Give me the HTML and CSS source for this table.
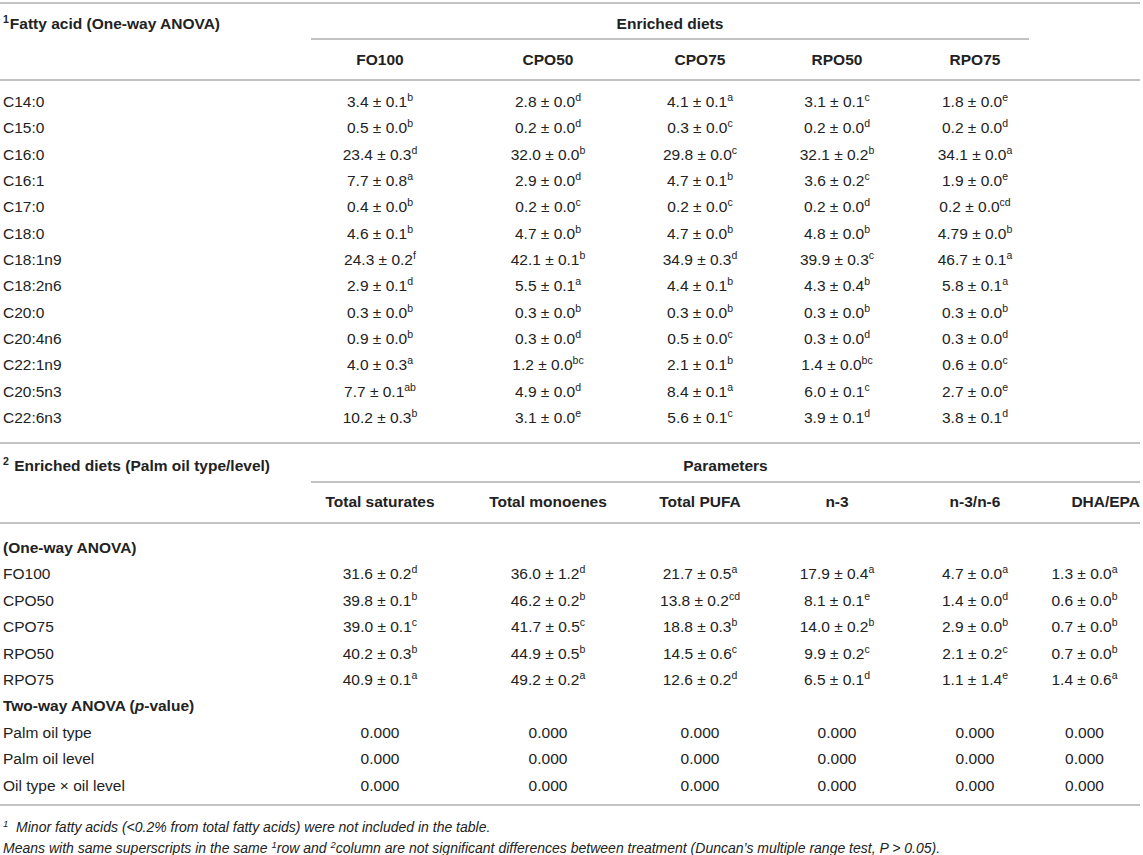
FILE: index.html
```html
<!DOCTYPE html>
<html lang="en">
<head>
<meta charset="utf-8">
<title>Fatty acid composition</title>
<link rel="stylesheet" href="styles.css">
</head>
<body>
<div class="page">
  <section class="tbl tbl-top">
    <div class="row title-row">
      <div class="cell lab b"><sup class="fn">1</sup>Fatty acid (One-way ANOVA)</div>
      <div class="cell span5 b">Enriched diets</div>
      <div class="cell"></div>
    </div>
    <div class="row head-row">
      <div class="cell"></div>
      <div class="cell b">FO100</div>
      <div class="cell b">CPO50</div>
      <div class="cell b">CPO75</div>
      <div class="cell b">RPO50</div>
      <div class="cell b">RPO75</div>
      <div class="cell"></div>
    </div>
    <div class="body body-top">
      <div class="row data"><div class="cell lab">C14:0</div><div class="cell">3.4 ± 0.1<sup>b</sup></div><div class="cell">2.8 ± 0.0<sup>d</sup></div><div class="cell">4.1 ± 0.1<sup>a</sup></div><div class="cell">3.1 ± 0.1<sup>c</sup></div><div class="cell">1.8 ± 0.0<sup>e</sup></div><div class="cell"></div></div>
      <div class="row data"><div class="cell lab">C15:0</div><div class="cell">0.5 ± 0.0<sup>b</sup></div><div class="cell">0.2 ± 0.0<sup>d</sup></div><div class="cell">0.3 ± 0.0<sup>c</sup></div><div class="cell">0.2 ± 0.0<sup>d</sup></div><div class="cell">0.2 ± 0.0<sup>d</sup></div><div class="cell"></div></div>
      <div class="row data"><div class="cell lab">C16:0</div><div class="cell">23.4 ± 0.3<sup>d</sup></div><div class="cell">32.0 ± 0.0<sup>b</sup></div><div class="cell">29.8 ± 0.0<sup>c</sup></div><div class="cell">32.1 ± 0.2<sup>b</sup></div><div class="cell">34.1 ± 0.0<sup>a</sup></div><div class="cell"></div></div>
      <div class="row data"><div class="cell lab">C16:1</div><div class="cell">7.7 ± 0.8<sup>a</sup></div><div class="cell">2.9 ± 0.0<sup>d</sup></div><div class="cell">4.7 ± 0.1<sup>b</sup></div><div class="cell">3.6 ± 0.2<sup>c</sup></div><div class="cell">1.9 ± 0.0<sup>e</sup></div><div class="cell"></div></div>
      <div class="row data"><div class="cell lab">C17:0</div><div class="cell">0.4 ± 0.0<sup>b</sup></div><div class="cell">0.2 ± 0.0<sup>c</sup></div><div class="cell">0.2 ± 0.0<sup>c</sup></div><div class="cell">0.2 ± 0.0<sup>d</sup></div><div class="cell">0.2 ± 0.0<sup>cd</sup></div><div class="cell"></div></div>
      <div class="row data"><div class="cell lab">C18:0</div><div class="cell">4.6 ± 0.1<sup>b</sup></div><div class="cell">4.7 ± 0.0<sup>b</sup></div><div class="cell">4.7 ± 0.0<sup>b</sup></div><div class="cell">4.8 ± 0.0<sup>b</sup></div><div class="cell">4.79 ± 0.0<sup>b</sup></div><div class="cell"></div></div>
      <div class="row data"><div class="cell lab">C18:1n9</div><div class="cell">24.3 ± 0.2<sup>f</sup></div><div class="cell">42.1 ± 0.1<sup>b</sup></div><div class="cell">34.9 ± 0.3<sup>d</sup></div><div class="cell">39.9 ± 0.3<sup>c</sup></div><div class="cell">46.7 ± 0.1<sup>a</sup></div><div class="cell"></div></div>
      <div class="row data"><div class="cell lab">C18:2n6</div><div class="cell">2.9 ± 0.1<sup>d</sup></div><div class="cell">5.5 ± 0.1<sup>a</sup></div><div class="cell">4.4 ± 0.1<sup>b</sup></div><div class="cell">4.3 ± 0.4<sup>b</sup></div><div class="cell">5.8 ± 0.1<sup>a</sup></div><div class="cell"></div></div>
      <div class="row data"><div class="cell lab">C20:0</div><div class="cell">0.3 ± 0.0<sup>b</sup></div><div class="cell">0.3 ± 0.0<sup>b</sup></div><div class="cell">0.3 ± 0.0<sup>b</sup></div><div class="cell">0.3 ± 0.0<sup>b</sup></div><div class="cell">0.3 ± 0.0<sup>b</sup></div><div class="cell"></div></div>
      <div class="row data"><div class="cell lab">C20:4n6</div><div class="cell">0.9 ± 0.0<sup>b</sup></div><div class="cell">0.3 ± 0.0<sup>d</sup></div><div class="cell">0.5 ± 0.0<sup>c</sup></div><div class="cell">0.3 ± 0.0<sup>d</sup></div><div class="cell">0.3 ± 0.0<sup>d</sup></div><div class="cell"></div></div>
      <div class="row data"><div class="cell lab">C22:1n9</div><div class="cell">4.0 ± 0.3<sup>a</sup></div><div class="cell">1.2 ± 0.0<sup>bc</sup></div><div class="cell">2.1 ± 0.1<sup>b</sup></div><div class="cell">1.4 ± 0.0<sup>bc</sup></div><div class="cell">0.6 ± 0.0<sup>c</sup></div><div class="cell"></div></div>
      <div class="row data"><div class="cell lab">C20:5n3</div><div class="cell">7.7 ± 0.1<sup>ab</sup></div><div class="cell">4.9 ± 0.0<sup>d</sup></div><div class="cell">8.4 ± 0.1<sup>a</sup></div><div class="cell">6.0 ± 0.1<sup>c</sup></div><div class="cell">2.7 ± 0.0<sup>e</sup></div><div class="cell"></div></div>
      <div class="row data"><div class="cell lab">C22:6n3</div><div class="cell">10.2 ± 0.3<sup>b</sup></div><div class="cell">3.1 ± 0.0<sup>e</sup></div><div class="cell">5.6 ± 0.1<sup>c</sup></div><div class="cell">3.9 ± 0.1<sup>d</sup></div><div class="cell">3.8 ± 0.1<sup>d</sup></div><div class="cell"></div></div>
    </div>
  </section>

  <section class="tbl tbl-bottom">
    <div class="row title-row title-row-2">
      <div class="cell lab b"><sup class="fn">2</sup> Enriched diets (Palm oil type/level)</div>
      <div class="cell span6 b">Parameters</div>
    </div>
    <div class="row head-row head-row-2">
      <div class="cell"></div>
      <div class="cell b">Total saturates</div>
      <div class="cell b">Total monoenes</div>
      <div class="cell b">Total PUFA</div>
      <div class="cell b">n-3</div>
      <div class="cell b">n-3/n-6</div>
      <div class="cell b last-head">DHA/EPA</div>
    </div>
    <div class="body body-bottom">
      <div class="row data data-2"><div class="cell lab b">(One-way ANOVA)</div><div class="cell"></div><div class="cell"></div><div class="cell"></div><div class="cell"></div><div class="cell"></div><div class="cell"></div></div>
      <div class="row data data-2"><div class="cell lab">FO100</div><div class="cell">31.6 ± 0.2<sup>d</sup></div><div class="cell">36.0 ± 1.2<sup>d</sup></div><div class="cell">21.7 ± 0.5<sup>a</sup></div><div class="cell">17.9 ± 0.4<sup>a</sup></div><div class="cell">4.7 ± 0.0<sup>a</sup></div><div class="cell">1.3 ± 0.0<sup>a</sup></div></div>
      <div class="row data data-2"><div class="cell lab">CPO50</div><div class="cell">39.8 ± 0.1<sup>b</sup></div><div class="cell">46.2 ± 0.2<sup>b</sup></div><div class="cell">13.8 ± 0.2<sup>cd</sup></div><div class="cell">8.1 ± 0.1<sup>e</sup></div><div class="cell">1.4 ± 0.0<sup>d</sup></div><div class="cell">0.6 ± 0.0<sup>b</sup></div></div>
      <div class="row data data-2"><div class="cell lab">CPO75</div><div class="cell">39.0 ± 0.1<sup>c</sup></div><div class="cell">41.7 ± 0.5<sup>c</sup></div><div class="cell">18.8 ± 0.3<sup>b</sup></div><div class="cell">14.0 ± 0.2<sup>b</sup></div><div class="cell">2.9 ± 0.0<sup>b</sup></div><div class="cell">0.7 ± 0.0<sup>b</sup></div></div>
      <div class="row data data-2"><div class="cell lab">RPO50</div><div class="cell">40.2 ± 0.3<sup>b</sup></div><div class="cell">44.9 ± 0.5<sup>b</sup></div><div class="cell">14.5 ± 0.6<sup>c</sup></div><div class="cell">9.9 ± 0.2<sup>c</sup></div><div class="cell">2.1 ± 0.2<sup>c</sup></div><div class="cell">0.7 ± 0.0<sup>b</sup></div></div>
      <div class="row data data-2"><div class="cell lab">RPO75</div><div class="cell">40.9 ± 0.1<sup>a</sup></div><div class="cell">49.2 ± 0.2<sup>a</sup></div><div class="cell">12.6 ± 0.2<sup>d</sup></div><div class="cell">6.5 ± 0.1<sup>d</sup></div><div class="cell">1.1 ± 1.4<sup>e</sup></div><div class="cell">1.4 ± 0.6<sup>a</sup></div></div>
      <div class="row data data-2"><div class="cell lab b">Two-way ANOVA (<i>p</i>-value)</div><div class="cell"></div><div class="cell"></div><div class="cell"></div><div class="cell"></div><div class="cell"></div><div class="cell"></div></div>
      <div class="row data data-2"><div class="cell lab">Palm oil type</div><div class="cell">0.000</div><div class="cell">0.000</div><div class="cell">0.000</div><div class="cell">0.000</div><div class="cell">0.000</div><div class="cell">0.000</div></div>
      <div class="row data data-2"><div class="cell lab">Palm oil level</div><div class="cell">0.000</div><div class="cell">0.000</div><div class="cell">0.000</div><div class="cell">0.000</div><div class="cell">0.000</div><div class="cell">0.000</div></div>
      <div class="row data data-2"><div class="cell lab">Oil type × oil level</div><div class="cell">0.000</div><div class="cell">0.000</div><div class="cell">0.000</div><div class="cell">0.000</div><div class="cell">0.000</div><div class="cell">0.000</div></div>
    </div>
  </section>

  <footer class="notes">
    <p><sup>1</sup>&nbsp; Minor fatty acids (&lt;0.2% from total fatty acids) were not included in the table.</p>
    <p>Means with same superscripts in the same <sup>1</sup>row and <sup>2</sup>column are not significant differences between treatment (Duncan’s multiple range test, <span class="up">P</span> &gt; 0.05).</p>
  </footer>
</div>
</body>
</html>
```

FILE: styles.css
```css
html, body {
  margin: 0;
  padding: 0;
  background: #ffffff;
}

body {
  font-family: "Liberation Sans", Arial, sans-serif;
  font-size: 15.5px;
  color: #222222;
}

.page {
  width: 1140px;
  padding-top: 2px;
}

.tbl {
  display: flex;
  flex-direction: column;
}

.tbl-top {
  border-top: 2px solid #c2c2c2;
}

.row {
  display: grid;
  grid-template-columns: 311px 138px 198px 106px 168px 108px 111px;
}

.cell {
  text-align: center;
  white-space: nowrap;
  line-height: 20px;
}

.cell.lab {
  text-align: left;
  padding-left: 3px;
}

.b {
  font-weight: bold;
}

.title-row {
  height: 36px;
}

.title-row .cell {
  padding-top: 10px;
  box-sizing: border-box;
}

.span5 {
  grid-column: 2 / 7;
  border-bottom: 2px solid #c2c2c2;
}

.span6 {
  grid-column: 2 / 8;
  border-bottom: 2px solid #c2c2c2;
}

.title-row-2 {
  height: 39px;
}

.title-row-2 .cell {
  padding-top: 12px;
}

.head-row {
  height: 41px;
  box-sizing: border-box;
  border-bottom: 2px solid #c2c2c2;
}

.head-row .cell {
  padding-top: 10px;
}

.head-row-2 .cell {
  padding-top: 9px;
}

.head-row .last-head {
  text-align: right;
}

.body {
  display: flex;
  flex-direction: column;
  border-bottom: 2px solid #c2c2c2;
}

.body-top {
  padding-top: 8px;
  padding-bottom: 10.5px;
}

.body-bottom {
  padding-top: 11px;
  padding-bottom: 4.6px;
}

.data .cell {
  line-height: 26.33px;
  height: 26.33px;
}

.data-2 .cell {
  line-height: 26.44px;
  height: 26.44px;
}

sup {
  font-size: 10.5px;
  line-height: 0;
  vertical-align: 6px;
  font-weight: normal;
}

sup.fn {
  font-weight: bold;
  margin-right: 1px;
}

.notes {
  padding-top: 11.5px;
  font-size: 14px;
  font-style: italic;
}

.notes p {
  margin: 0;
  padding-left: 3px;
  line-height: 21px;
}

.notes sup {
  font-size: 9.5px;
  vertical-align: 5px;
}
```
